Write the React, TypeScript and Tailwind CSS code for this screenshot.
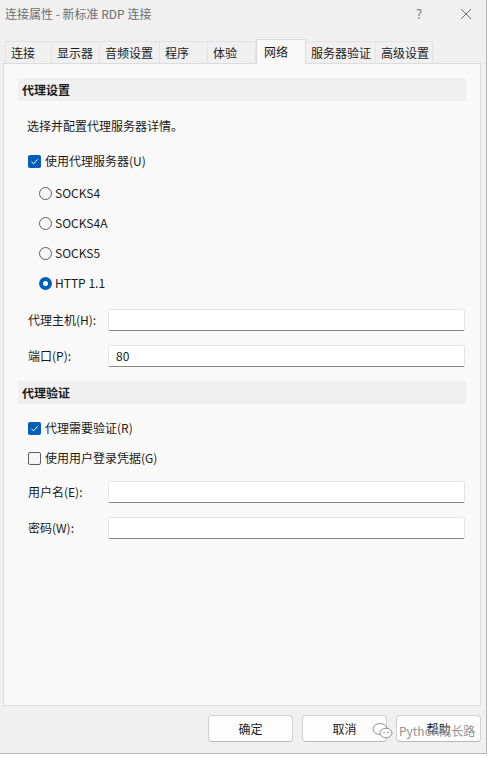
import React from 'react'

const font = { fontFamily: '"Noto Sans CJK SC", "Noto Sans", sans-serif' }

const tabs = ['连接', '显示器', '音频设置', '程序', '体验', '网络', '服务器验证', '高级设置']
const tabWidths = ['w-[47px]', 'w-[48px]', 'w-[60px]', 'w-[48px]', 'w-[48px]', 'w-[50px]', 'w-[70px]', 'w-[57px]']

function Checkbox({ checked, label }: { checked?: boolean; label: string }): React.JSX.Element {
  return (
    <div className="flex items-center h-[18px] pl-[24px] gap-[4px]">
      {checked ? (
        <span className="w-[13px] h-[13px] rounded-[2px] bg-[#005fb8] flex items-center justify-center">
          <svg width="9" height="9" viewBox="0 0 9 9">
            <path d="M1.5 4.8 L3.6 6.8 L7.6 2.4" fill="none" stroke="white" strokeWidth="1" />
          </svg>
        </span>
      ) : (
        <span className="w-[13px] h-[13px] rounded-[2px] border border-[#5f5f5f] bg-[#f6f6f6]" />
      )}
      <span className="text-[12px] text-[#1a1a1a]">{label}</span>
    </div>
  )
}

function Radio({ checked, label }: { checked?: boolean; label: string }): React.JSX.Element {
  return (
    <div className="flex items-center h-[18px] pl-[35px] gap-[3px]">
      {checked ? (
        <span className="w-[13px] h-[13px] rounded-full bg-[#005fb8] flex items-center justify-center">
          <span className="w-[5px] h-[5px] rounded-full bg-white" />
        </span>
      ) : (
        <span className="w-[13px] h-[13px] rounded-full border border-[#5f5f5f] bg-[#f6f6f6]" />
      )}
      <span className="text-[12px] text-[#1a1a1a]">{label}</span>
    </div>
  )
}

function Field({ label, value }: { label: string; value?: string }): React.JSX.Element {
  return (
    <div className="flex items-center pl-[24px] pr-[15px]">
      <span className="w-[80px] text-[12px] text-[#1a1a1a]">{label}</span>
      <div className="flex-1 h-[22px] bg-white border border-[#e5e5e5] border-b-[#868686] rounded-[2px] flex items-center px-[7px] text-[12px] text-[#1a1a1a]">
        {value}
      </div>
    </div>
  )
}

function SectionHeader({ title }: { title: string }): React.JSX.Element {
  return (
    <div className="mx-[14px] h-[23px] bg-[#f0f0f0] flex items-center px-[4px] text-[12px] font-bold text-[#1a1a1a]">
      {title}
    </div>
  )
}

function Button({ label }: { label: string }): React.JSX.Element {
  return (
    <div className="w-[85px] h-[27px] rounded-[4px] bg-[#fdfdfd] border border-[#d0d0d0] border-b-[#b8b8b8] flex items-center justify-center text-[12px] text-[#1a1a1a]">
      {label}
    </div>
  )
}

export default function App(): React.JSX.Element {
  return (
    <div className="w-[491px] h-[758px] bg-white relative overflow-hidden" style={font}>
      <div className="w-[487px] h-[754px] bg-[#f0f0f0] border-r border-b border-[#b4b4b4] flex flex-col">
        {/* title bar */}
        <div className="h-[30px] flex items-center pl-[5px] relative">
          <span className="text-[12px] text-[#6e6e6e] mt-[-2px]">连接属性 - 新标准 RDP 连接</span>
          <span className="absolute left-[416px] top-[4px] text-[13px] text-[#7a7a7a]">?</span>
          <svg className="absolute left-[460px] top-[8px]" width="12" height="12" viewBox="0 0 12 12">
            <path d="M1 1 L11 11 M11 1 L1 11" stroke="#6e6e6e" strokeWidth="1" />
          </svg>
        </div>

        {/* tabs */}
        <div className="h-[33px] flex items-end pl-[5px] relative z-10">
          {tabs.map((t, i) =>
            t === '网络' ? (
              <div
                key={t}
                className={`${tabWidths[i]} h-[25px] mb-[-1px] bg-[#f9f9f9] border border-[#dcdcdc] border-b-0 flex items-start pt-[3px] pl-[7px] text-[12px] text-[#1a1a1a]`}
              >
                {t}
              </div>
            ) : (
              <div
                key={t}
                className={`${tabWidths[i]} h-[22px] bg-[#f0f0f0] border-t border-r border-[#e3e3e3] first:border-l flex items-center pl-[5px] text-[12px] text-[#1a1a1a]`}
              >
                {t}
              </div>
            ),
          )}
        </div>

        {/* panel */}
        <div className="mx-[3px] w-[478px] h-[643px] bg-[#f9f9f9] border border-[#dcdcdc] flex flex-col">
          <div className="h-[14px]" />
          <SectionHeader title="代理设置" />
          <div className="mt-[16px] h-[18px] flex items-center pl-[23px] text-[12px] text-[#1a1a1a]">
            选择并配置代理服务器详情。
          </div>
          <div className="mt-[17px]">
            <Checkbox checked label="使用代理服务器(U)" />
          </div>
          <div className="mt-[14px] flex flex-col gap-[12px]">
            <Radio label="SOCKS4" />
            <Radio label="SOCKS4A" />
            <Radio label="SOCKS5" />
            <Radio checked label="HTTP 1.1" />
          </div>
          <div className="mt-[17px]">
            <Field label="代理主机(H):" />
          </div>
          <div className="mt-[14px]">
            <Field label="端口(P):" value="80" />
          </div>
          <div className="mt-[14px]">
            <SectionHeader title="代理验证" />
          </div>
          <div className="mt-[15px] flex flex-col gap-[12px]">
            <Checkbox checked label="代理需要验证(R)" />
            <Checkbox label="使用用户登录凭据(G)" />
          </div>
          <div className="mt-[14px]">
            <Field label="用户名(E):" />
          </div>
          <div className="mt-[14px]">
            <Field label="密码(W):" />
          </div>
        </div>

        {/* buttons */}
        <div className="mt-[9px] flex justify-end gap-[9px] pr-[5px]">
          <Button label="确定" />
          <Button label="取消" />
          <Button label="帮助" />
        </div>
      </div>

      {/* watermark */}
      <div className="absolute left-[372px] top-[722px] flex items-center gap-[5px] opacity-80">
        <svg width="22" height="18" viewBox="0 0 22 18">
          <ellipse cx="8" cy="7" rx="7" ry="5.5" fill="white" stroke="#7a7a7a" strokeWidth="1" />
          <ellipse cx="14" cy="11" rx="6" ry="4.8" fill="white" stroke="#7a7a7a" strokeWidth="1" />
          <circle cx="12" cy="10.5" r="0.8" fill="#7a7a7a" />
          <circle cx="16" cy="10.5" r="0.8" fill="#7a7a7a" />
        </svg>
        <span className="text-[12px] text-[#7a7a7a] [text-shadow:0_0_2px_white]">Python成长路</span>
      </div>
    </div>
  )
}
